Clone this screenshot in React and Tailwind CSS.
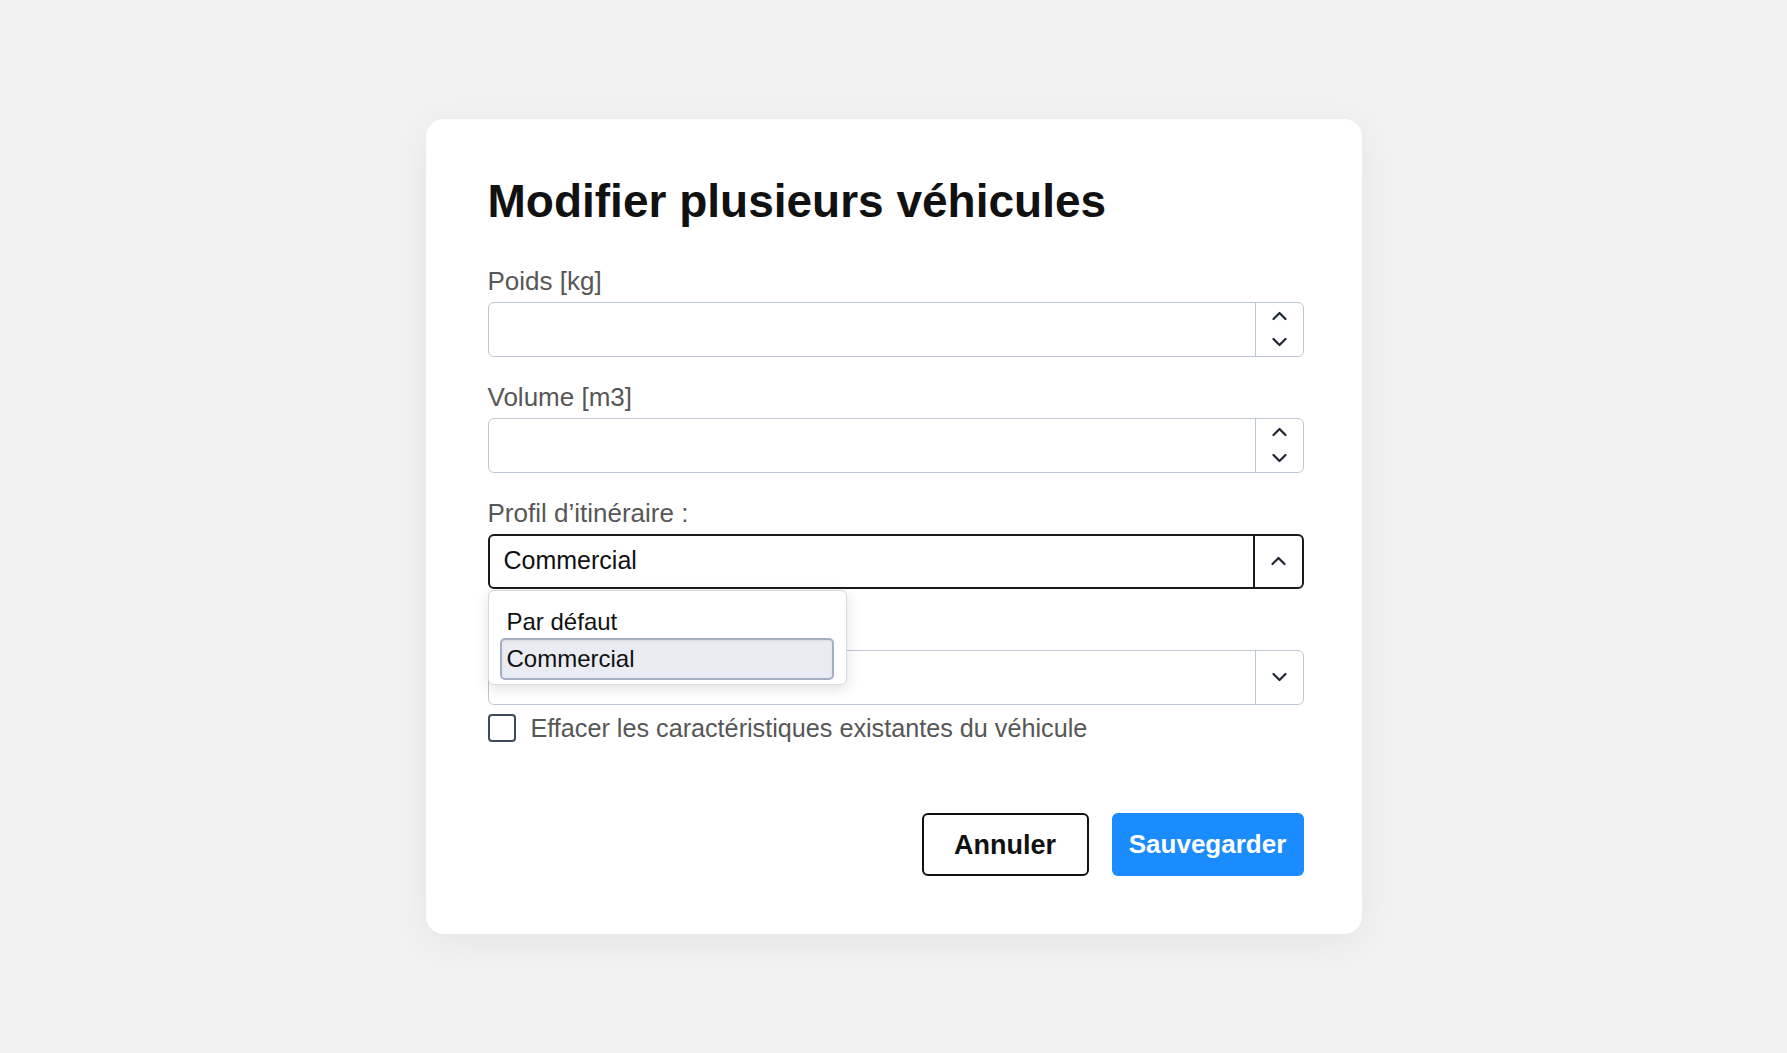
import React from 'react';

function Chevron({ up = false }) {
  return (
    <svg width="15" height="10" viewBox="0 0 15 10" fill="none" className="block">
      <path
        d={up ? 'M1.5 8 L7.5 2 L13.5 8' : 'M1.5 2 L7.5 8 L13.5 2'}
        stroke="#1e2533"
        strokeWidth="2.2"
        strokeLinecap="round"
        strokeLinejoin="round"
      />
    </svg>
  );
}

function Field({ label, children }) {
  return (
    <div className="flex flex-col">
      <label className="h-[32px] text-[26px] leading-[32px] text-[#575757] mb-[5px]">{label}</label>
      {children}
    </div>
  );
}

function NumberInput() {
  return (
    <div className="flex h-[55px] border-[1.5px] border-[#bcc6d6] rounded-[6px] bg-white">
      <div className="flex-1" />
      <div className="w-[48px] border-l-[1.5px] border-[#bcc6d6] flex flex-col items-center justify-center gap-[16px]">
        <Chevron up />
        <Chevron />
      </div>
    </div>
  );
}

export default function App() {
  return (
    <div className="min-h-screen bg-[#f2f2f2] flex items-center justify-center font-['Liberation_Sans',Arial,sans-serif]">
      <div className="w-[936px] bg-white rounded-[18px] shadow-[0_8px_40px_rgba(0,0,0,0.06)] pl-[62px] pr-[58px] pt-[54px] pb-[58px]">
        <h1 className="text-[46px] leading-[56px] font-bold text-[#111]">Modifier plusieurs véhicules</h1>

        <div className="mt-[36px] flex flex-col gap-[24px]">
          <Field label="Poids [kg]">
            <NumberInput />
          </Field>
          <Field label="Volume [m3]">
            <NumberInput />
          </Field>
          <Field label="Profil d’itinéraire :">
            <div className="relative">
              <div className="flex h-[55px] border-2 border-[#1a1a1a] rounded-[6px] bg-white">
                <div className="flex-1 flex items-center pl-[14px] text-[25px] text-[#111]">Commercial</div>
                <div className="w-[49px] border-l-2 border-[#1a1a1a] flex items-center justify-center">
                  <Chevron up />
                </div>
              </div>
              <div className="absolute left-0 top-[calc(100%+1px)] z-10 w-[359px] h-[95px] bg-white border border-[#d5d9df] rounded-[6px] shadow-[0_4px_14px_rgba(0,0,0,0.12)] pl-[11px] pr-[12px] pt-[15px]">
                <div className="h-[32px] leading-[32px] pl-[7px] text-[24px] text-[#111]">Par défaut</div>
                <div className="h-[42px] flex items-center pl-[5px] text-[24px] text-[#111] bg-[#e9edf3] border-2 border-[#a4afc1] rounded-[5px] shadow-[inset_0_1px_2px_rgba(0,0,0,0.08)]">
                  Commercial
                </div>
              </div>
            </div>
          </Field>
          <Field label="">
            <div className="flex h-[55px] border-[1.5px] border-[#bcc6d6] rounded-[6px] bg-white">
              <div className="flex-1" />
              <div className="w-[48px] border-l-[1.5px] border-[#bcc6d6] flex items-center justify-center">
                <Chevron />
              </div>
            </div>
          </Field>
        </div>

        <div className="mt-[5px] flex items-center gap-[15px]">
          <div className="w-[28px] h-[28px] border-2 border-[#3f4a5a] rounded-[4px] bg-white" />
          <span className="text-[25.2px] text-[#575757]">Effacer les caractéristiques existantes du véhicule</span>
        </div>

        <div className="mt-[66px] flex justify-end gap-[23px]">
          <button className="w-[167px] h-[63px] border-2 border-[#111] rounded-[6px] bg-white text-[27px] font-bold text-[#111]">
            Annuler
          </button>
          <button className="w-[192px] h-[63px] rounded-[6px] bg-[#1a8cff] text-[26px] font-bold text-white">
            Sauvegarder
          </button>
        </div>
      </div>
    </div>
  );
}
